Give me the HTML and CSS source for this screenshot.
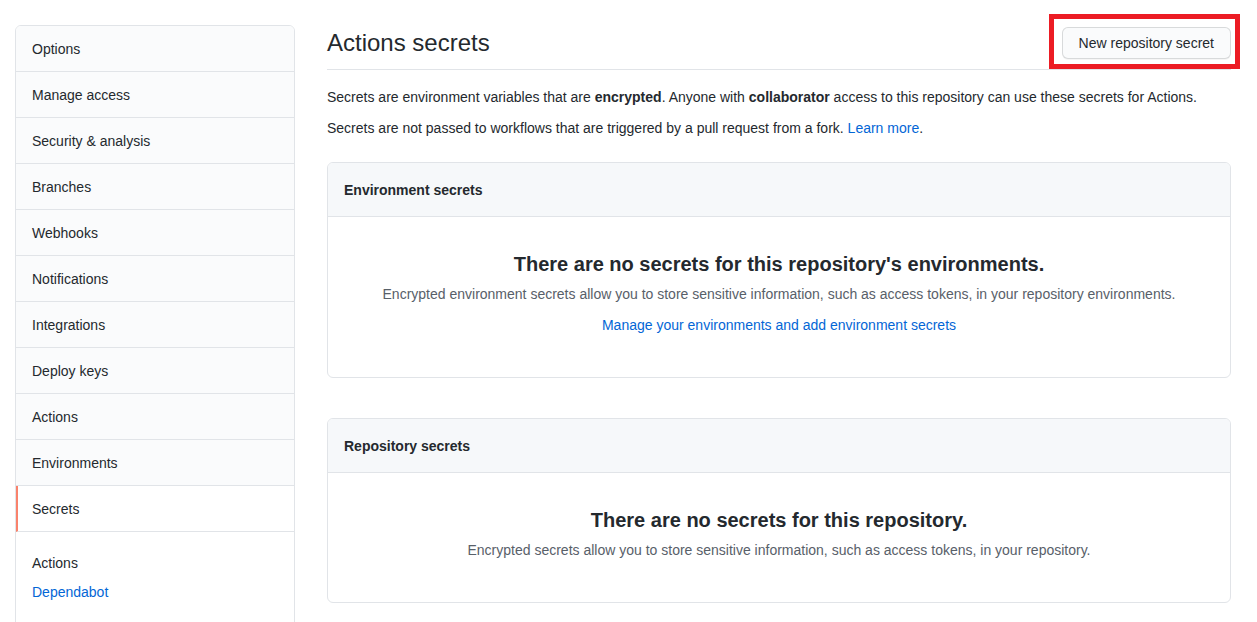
FILE: index.html
```html
<!DOCTYPE html>
<html lang="en">
<head>
<meta charset="utf-8">
<title>Actions secrets</title>
<link rel="stylesheet" href="styles.css">
</head>
<body>
<div class="page">
  <nav class="sidebar">
    <ul class="menu">
      <li class="menu-item">Options</li>
      <li class="menu-item">Manage access</li>
      <li class="menu-item">Security &amp; analysis</li>
      <li class="menu-item">Branches</li>
      <li class="menu-item">Webhooks</li>
      <li class="menu-item">Notifications</li>
      <li class="menu-item">Integrations</li>
      <li class="menu-item">Deploy keys</li>
      <li class="menu-item">Actions</li>
      <li class="menu-item">Environments</li>
      <li class="menu-item selected">Secrets</li>
    </ul>
    <div class="submenu">
      <div class="submenu-heading">Actions</div>
      <a class="submenu-link" href="#">Dependabot</a>
    </div>
  </nav>
  <main class="main">
    <div class="subhead">
      <h2 class="subhead-title">Actions secrets</h2>
      <div class="subhead-actions">
        <button class="btn">New repository secret</button>
        <span class="highlight"></span>
      </div>
    </div>
    <p class="text">Secrets are environment variables that are <strong>encrypted</strong>. Anyone with <strong>collaborator</strong> access to this repository can use these secrets for Actions.</p>
    <p class="text">Secrets are not passed to workflows that are triggered by a pull request from a fork. <a class="link" href="#">Learn more</a>.</p>

    <section class="box">
      <div class="box-header">Environment secrets</div>
      <div class="blankslate">
        <h3 class="blank-title">There are no secrets for this repository's environments.</h3>
        <p class="blank-desc">Encrypted environment secrets allow you to store sensitive information, such as access tokens, in your repository environments.</p>
        <p class="blank-desc"><a class="link" href="#">Manage your environments and add environment secrets</a></p>
      </div>
    </section>

    <section class="box box-second">
      <div class="box-header">Repository secrets</div>
      <div class="blankslate">
        <h3 class="blank-title">There are no secrets for this repository.</h3>
        <p class="blank-desc">Encrypted secrets allow you to store sensitive information, such as access tokens, in your repository.</p>
      </div>
    </section>
  </main>
</div>
</body>
</html>
```

FILE: styles.css
```css
* { box-sizing: border-box; }
html, body { margin: 0; padding: 0; background: #fff; }
body {
  font-family: "Liberation Sans", Arial, sans-serif;
  font-size: 14px;
  line-height: 1.5;
  color: #24292e;
  overflow: hidden;
}
.page {
  display: flex;
  gap: 32px;
  padding: 25px 26px 0 15px;
}
.sidebar {
  width: 280px;
  flex: 0 0 280px;
  border: 1px solid #e1e4e8;
  border-radius: 6px;
  background: #fff;
  overflow: hidden;
}
.menu { list-style: none; margin: 0; padding: 0; }
.menu-item {
  padding: 13px 16px 11px;
  background: #fafbfc;
  border-bottom: 1px solid #e1e4e8;
  color: #24292e;
}
.menu-item.selected {
  background: #fff;
  border-left: 2px solid #f9826c;
  padding-left: 14px;
}
.submenu {
  padding: 21px 16px 40px;
}
.submenu-heading { margin-bottom: 8px; }
.submenu-link { color: #0366d6; text-decoration: none; }
.main { flex: 1; min-width: 0; }
.subhead {
  display: flex;
  align-items: center;
  padding-bottom: 8px;
  border-bottom: 1px solid #e1e4e8;
  margin-bottom: 17px;
}
.subhead-title {
  flex: 1;
  margin: 0;
  font-size: 24px;
  font-weight: 400;
  line-height: 36px;
}
.subhead-actions { position: relative; }
.btn {
  font-family: inherit;
  font-size: 14px;
  line-height: 20px;
  padding: 5px 16px;
  color: #24292e;
  background: #fafbfc;
  border: 1px solid rgba(27,31,35,0.15);
  border-radius: 6px;
  box-shadow: 0 1px 0 rgba(27,31,35,0.04);
  display: block;
}
.highlight {
  position: absolute;
  left: -13px;
  right: -9px;
  top: -13px;
  bottom: -10px;
  border: 5px solid #ec1c24;
  pointer-events: none;
}
.text { margin: 0 0 10px; }
.link { color: #0366d6; text-decoration: none; }
.box {
  margin-top: 23px;
  border: 1px solid #e1e4e8;
  border-radius: 6px;
  overflow: hidden;
}
.box-second { margin-top: 40px; }
.box-header {
  padding: 17px 16px 15px;
  background: #f6f8fa;
  border-bottom: 1px solid #e1e4e8;
  font-weight: 700;
}
.blankslate {
  padding: 32px 32px 31px;
  text-align: center;
}
.blank-title {
  margin: 0 0 5px;
  font-size: 20px;
  font-weight: 700;
  line-height: 30px;
}
.blank-desc {
  margin: 0 0 10px;
  color: #586069;
}
.blank-desc .link { color: #0366d6; }
```
